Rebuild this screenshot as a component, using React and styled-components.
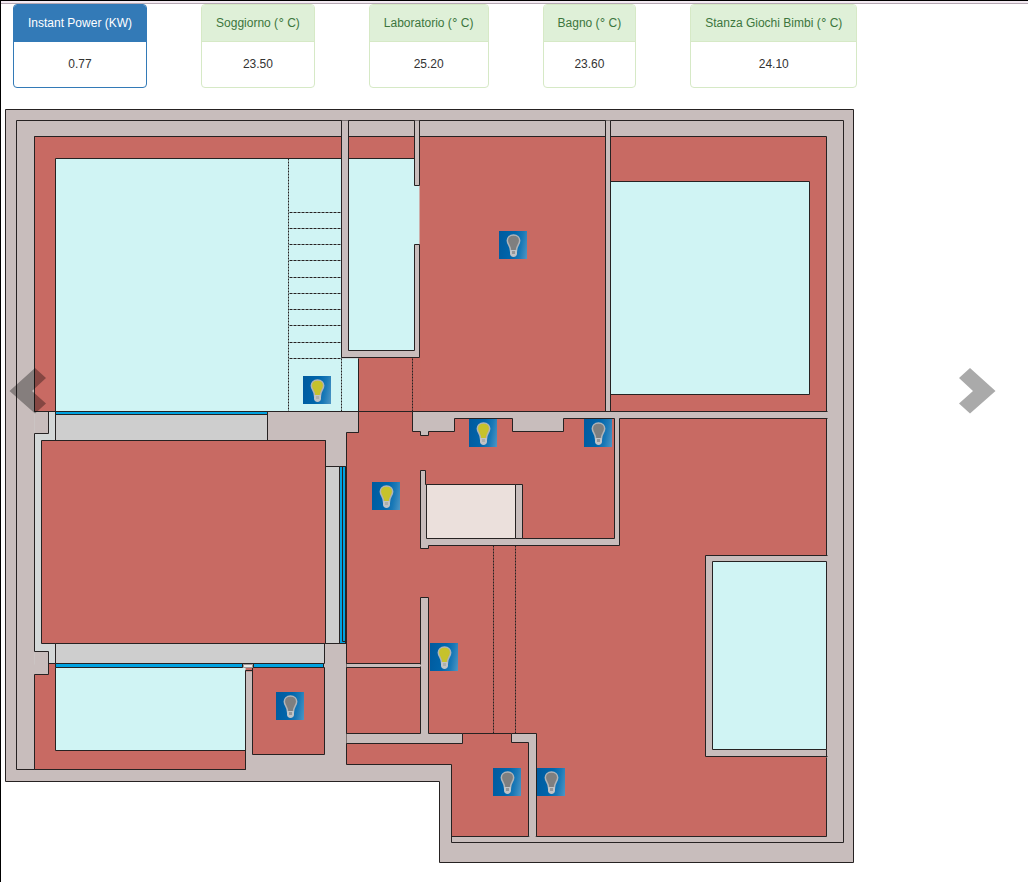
import React, { useState } from "react";
import styled, { createGlobalStyle } from "styled-components";

const GlobalStyle = createGlobalStyle`
  *, *::before, *::after { box-sizing: border-box; }
  body {
    margin: 0;
    background: #fff;
    color: #333;
    font-family: "Liberation Sans", Arial, sans-serif;
    font-size: 12px;
    line-height: 17px;
  }
`;

const Page = styled.main`
  min-height: 100vh;
  border-top: 1px solid #000;
  border-left: 1px solid #000;
`;

const TopRule = styled.div`
  height: 3px;
  background: #f3eaf2;
  border-bottom: 1px solid #b5a8b3;
`;

const Carousel = styled.section`
  position: relative;
`;

const Readings = styled.div`
  display: flex;
  flex-wrap: wrap;
  gap: 21px 54px;
  padding: 0 12px;
  margin-bottom: 21px;
`;

const Panel = styled.article`
  border: 1px solid ${(p) => (p.$primary ? "#337ab7" : "#d6e9c6")};
  border-radius: 4px;
  overflow: hidden;
  text-align: center;
`;

const PanelHeading = styled.h2`
  margin: 0;
  padding: 10px 14px 9px;
  font-size: 12px;
  font-weight: 400;
  white-space: nowrap;
  color: ${(p) => (p.$primary ? "#fff" : "#3c763d")};
  background: ${(p) => (p.$primary ? "#337ab7" : "#dff0d8")};
  border-bottom: 1px solid ${(p) => (p.$primary ? "#337ab7" : "#d6e9c6")};
`;

const Degree = styled.span`
  font-family: "DejaVu Sans", sans-serif;
  line-height: 1;
  padding-right: 3px;
`;

const PanelBody = styled.p`
  margin: 0;
  padding: 14px;
`;

const Plan = styled.div`
  position: relative;
  width: 100%;
  max-width: 850px;
  margin-left: 4px;
`;

const Drawing = styled.svg`
  display: block;
  width: 100%;
  height: auto;
`;

const LightButton = styled.button`
  position: absolute;
  left: ${(p) => ((p.$x - 5) / 850) * 100}%;
  top: ${(p) => ((p.$y - 109) / 754) * 100}%;
  width: 28px;
  height: 28px;
  padding: 0;
  border: 0;
  cursor: pointer;
  background: linear-gradient(100deg, #005a9e 0%, #0066ac 50%, #1a79b7 75%, #4f96c4 100%);

  svg { display: block; }
`;

const Arrow = styled.button`
  position: absolute;
  top: 364px;
  ${(p) => (p.$side === "left" ? "left: 8px;" : "right: 32px;")}
  width: 38px;
  height: 46px;
  padding: 0;
  border: 0;
  background: none;
  cursor: pointer;
  opacity: 0.33;

  svg {
    display: block;
    ${(p) => (p.$side === "left" ? "transform: scaleX(-1);" : "")}
  }
`;

const readings = [
  { name: "Instant Power", unit: "KW", value: "0.77", primary: true },
  { name: "Soggiorno", unit: "C", value: "23.50" },
  { name: "Laboratorio", unit: "C", value: "25.20" },
  { name: "Bagno", unit: "C", value: "23.60" },
  { name: "Stanza Giochi Bimbi", unit: "C", value: "24.10" },
];

const initialLights = [
  { x: 499, y: 231, on: false },
  { x: 303, y: 376, on: true },
  { x: 469, y: 419, on: true },
  { x: 584, y: 419, on: false },
  { x: 372, y: 482, on: true },
  { x: 430, y: 643, on: true },
  { x: 276, y: 692, on: false },
  { x: 493, y: 768, on: false },
  { x: 537, y: 768, on: false },
];

const WALL = "#c8bdbc";
const RED = "#c86a63";
const CYAN = "#d0f4f4";
const GREY = "#cecece";
const PALE = "#d4d8d8";
const BLUE = "#00a2e0";
const stairs = [212, 228, 244, 260, 277, 293, 309, 325, 342, 358];

function FloorPlan() {
  return (
    <Drawing viewBox="4.5 108.5 850 754" role="img" aria-label="Floor plan" fill="none" stroke="#262222">
      {/* outer walls */}
      <path d="M5 109H853V862H439V781H5Z" fill={WALL} />
      <path d="M245 769H16V120H843V842H451" />

      {/* upper left room and stairwell */}
      <path d="M34 136H341V411H34Z" fill={RED} />
      <path d="M55 158H341V358H358V411H55Z" fill={CYAN} stroke="none" />
      <path d="M341 158H55V411" />
      <path d="M348 136H414V158H348Z" fill={RED} />
      <path d="M348 158H414V185H420V244H414V350H348Z" fill={CYAN} stroke="none" />

      {/* upper middle and right rooms */}
      <path d="M419 136H605V411H419Z" fill={RED} stroke="none" />
      <path d="M419 136H605" />
      <path d="M610 136H826V411H610Z" fill={RED} />
      <path d="M610 181H809V394H610Z" fill={CYAN} />

      {/* hall and the large room on the lower right */}
      <path d="M358 357H420V411H826V836H451V764H346V432H358Z" fill={RED} stroke="none" />
      <path d="M358 358V432H346V764H451V842M451 836H826V757M826 555V418" />

      {/* partitions of the upper rooms */}
      <path d="M341 120V357H419V244H414V350H348V120" fill={WALL} stroke="none" />
      <path d="M341 120V357H419V244H414V350H348V120M348 158H414" />
      <path d="M414 120V185H419V120" fill={WALL} />
      <path d="M605 120V411H610V120" fill={WALL} />

      {/* wall round the bathroom */}
      <path
        d="M827 411H412V431H420V435H428V431H454V418H512V431H563V418H614V538H522V484H425V470H420V548H428V545H619V418H827"
        fill={WALL}
      />
      <path d="M426 484H515V538H426Z" fill="#ebe0dc" />
      <path d="M515 538H522" />

      {/* balcony and terrace on the left */}
      <path d="M34 411H55V440H41V651H34Z" fill={PALE} stroke="none" />
      <path d="M34 640H55V664H34Z" fill={PALE} stroke="none" />
      <path d="M34 674H48V663H245V769H34Z" fill={RED} stroke="none" />
      <path d="M34 411H48V433H34ZM34 651H48V674H34Z" fill={WALL} stroke="none" />
      <path d="M34 136V411H48V433H34V651H48V674H34V769H245" />
      <path d="M55 411H267V440H55Z" fill={GREY} />
      <path d="M55 411H267V414H55Z" fill={BLUE} />
      <path d="M267 411H358V432H346V466H325V440H267Z" fill={WALL} />
      <path d="M325 466H339V643H325Z" fill={GREY} />
      <path d="M339 466H345V643H339Z" fill={BLUE} />
      <path d="M342 466V641H345" />
      <path d="M41 440H325V643H41Z" fill={RED} />
      <path d="M55 643H324V663H55Z" fill={GREY} />
      <path d="M48 663H55M325 643H346" />

      {/* lower left room */}
      <path d="M245 667H252V671H245Z" fill={RED} stroke="none" />
      <path d="M55 667H245V750H55Z" fill={CYAN} stroke="none" />
      <path d="M55 667V750H245V769V670H252" />
      <path d="M252 667H324V754H252Z" fill={RED} />
      <path d="M55 663H242V667H55ZM253 663H323V667H253Z" fill={BLUE} />
      <path d="M243 664H252V667H243Z" fill="#eee9e6" stroke="#999" />

      {/* inner walls of the lower part */}
      <path d="M346 663H420V667H346Z" fill={WALL} stroke="none" />
      <path d="M346 663H420M346 667H420" />
      <path d="M346 733H420V597H428V733H462V743H346" fill={WALL} />
      <path d="M420 664V666" stroke={WALL} />
      <path d="M462 733H511" />
      <path d="M528 836V742H511V733H536V836" fill={WALL} />
      <path d="M529 836H535" stroke={WALL} />

      {/* closed room on the right */}
      <path d="M827 555H705V756H827" fill={WALL} />
      <path d="M712 561H826V749H712Z" fill={CYAN} />
      <path d="M826 749V756" />

      <path d="M34 411H412" />

      {/* stairs and beams */}
      <g strokeDasharray="3 1">
        <path d="M288 158V411M341 358V411M412 358V411" strokeDasharray="2 1" />
        {stairs.map((y) => (
          <path key={y} d={`M289 ${y}H341`} />
        ))}
        <path d="M493 545V733M515 545V733" strokeDasharray="2 1" />
      </g>
    </Drawing>
  );
}

function Bulb({ on }) {
  return (
    <svg width="28" height="28" viewBox="0 0 28 28" aria-hidden="true">
      <path
        d="M14.5 4C10.600 4 8.300 6.600 8.300 9.600C8.300 13.400 11.600 14.800 11.600 20H17.400C17.400 14.800 20.700 13.400 20.700 9.600C20.700 6.600 18.400 4 14.500 4Z"
        fill={on ? "#c6c22c" : "#7f7f7f"}
        stroke="#b0b4b8"
        strokeWidth="1.5"
      />
      <path d="M11 19H18V22.500C18 24.500 16.500 26 14.500 26C12.500 26 11 24.500 11 22.500Z" fill="#c0c3c6" />
      <path d="M13 20H16V23H13Z" fill={on ? "#aeb0ac" : "#959799"} />
    </svg>
  );
}

function Chevron() {
  return (
    <svg width="38" height="46" viewBox="0 0 38 46" aria-hidden="true">
      <path d="M12 0L37.500 23L12 45.500L1 35.500L15 23L1 10Z" fill="#000" />
    </svg>
  );
}

export default function App() {
  const [lights, setLights] = useState(initialLights);
  const toggle = (index) =>
    setLights((all) => all.map((l, i) => (i === index ? { ...l, on: !l.on } : l)));

  return (
    <>
      <GlobalStyle />
      <Page>
        <TopRule />
        <Carousel>
          <Readings>
            {readings.map((r) => (
              <Panel key={r.name} $primary={r.primary}>
                <PanelHeading $primary={r.primary}>
                  {r.name} ({r.unit === "C" && <Degree>°</Degree>}
                  {r.unit})
                </PanelHeading>
                <PanelBody>{r.value}</PanelBody>
              </Panel>
            ))}
          </Readings>
          <Plan>
            <FloorPlan />
            {lights.map((l, i) => (
              <LightButton
                key={i}
                type="button"
                $x={l.x}
                $y={l.y}
                aria-label={`Light ${i + 1}`}
                aria-pressed={l.on}
                onClick={() => toggle(i)}
              >
                <Bulb on={l.on} />
              </LightButton>
            ))}
          </Plan>
          <Arrow type="button" $side="left" aria-label="Previous">
            <Chevron />
          </Arrow>
          <Arrow type="button" $side="right" aria-label="Next">
            <Chevron />
          </Arrow>
        </Carousel>
      </Page>
    </>
  );
}
